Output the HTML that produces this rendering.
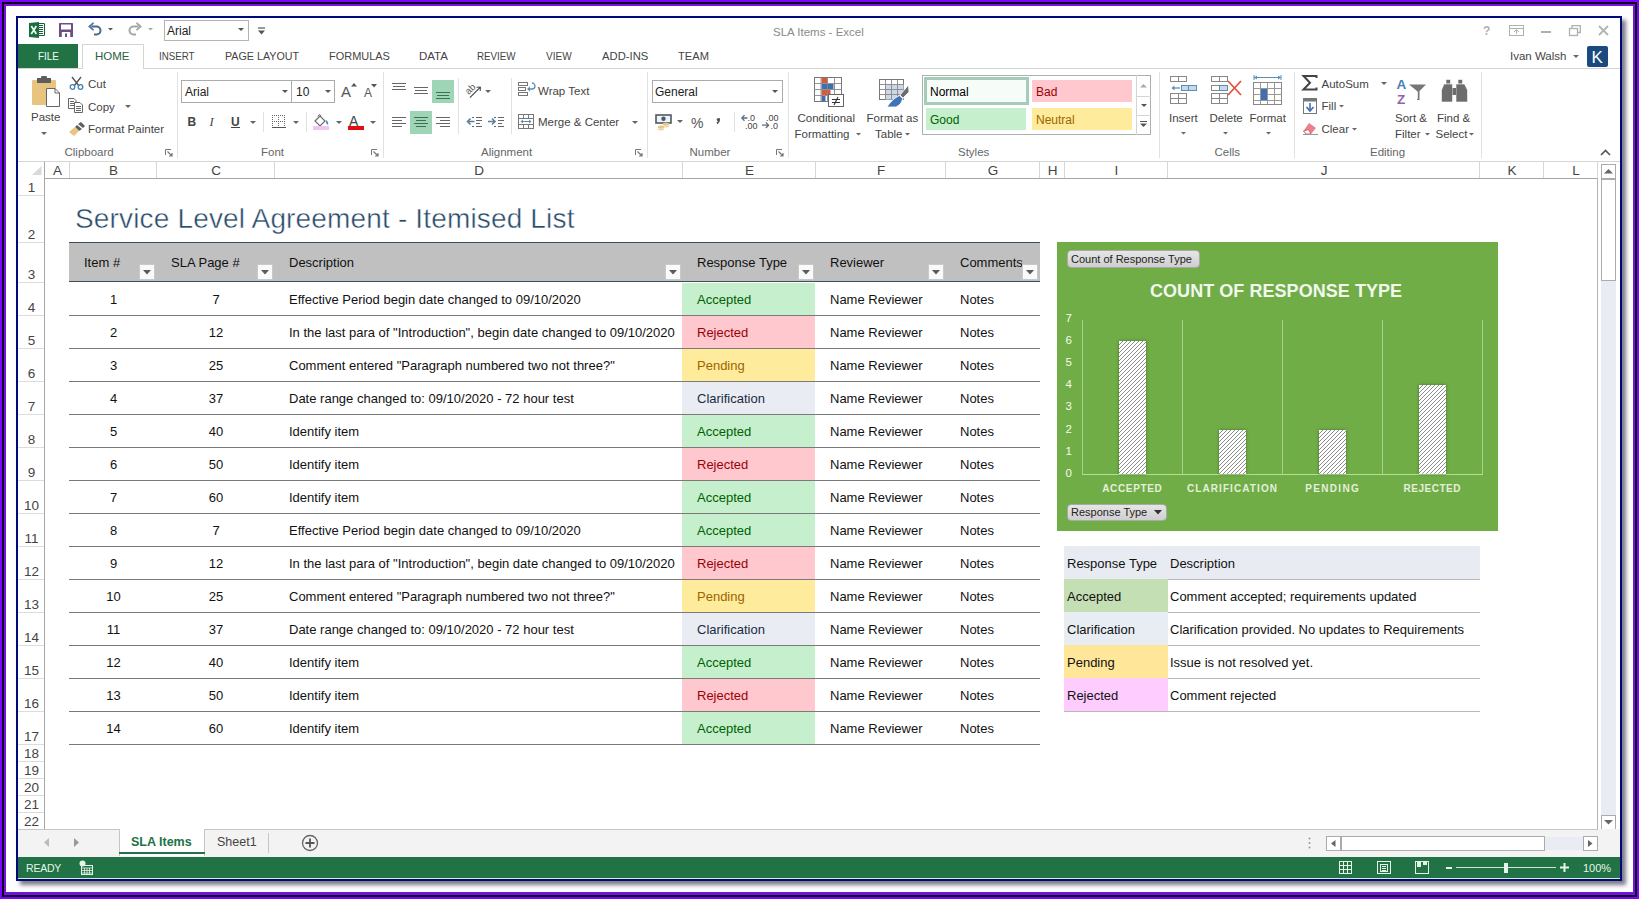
<!DOCTYPE html>
<html><head><meta charset="utf-8">
<style>
*{margin:0;padding:0;box-sizing:border-box}
html,body{width:1639px;height:899px;overflow:hidden;background:#7f02fc;font-family:"Liberation Sans",sans-serif;position:relative}
.a{position:absolute}
.t{white-space:nowrap;line-height:1}
svg{overflow:visible}
</style></head>
<body>

<div class="a" style="left:2px;top:2px;width:1635px;height:895px;border:2px solid #08001c;background:#7612de;"></div>
<div class="a" style="left:6px;top:6px;width:1627px;height:886px;background:#fefdff;"></div>
<div class="a" style="left:16px;top:16px;width:1606px;height:865px;background:#fff;border:2px solid #00087a;box-shadow:4px 4px 4px rgba(20,20,40,.55);"></div>
<div class="a" style="left:18px;top:18px;width:1602px;height:143px;background:#ffffff;"></div>
<svg class="a" style="left:29px;top:22px;" width="17" height="16" viewBox="0 0 17 16"><rect x="9.5" y="1.5" width="6" height="12" rx="0.8" fill="#fff" stroke="#1d5e3a" stroke-width="1.1"/>
      <path d="M10 3.5H14M10 5.5H14M10 7.5H14M10 9.5H14M10 11.5H14" stroke="#1d5e3a" stroke-width="1"/>
      <path d="M0 1L10 0V16L0 15Z" fill="#1e6b41"/>
      <path d="M2.3 4L7.3 12M7.3 4L2.3 12" stroke="#e8fff0" stroke-width="1.7"/></svg>
<svg class="a" style="left:59px;top:23px;" width="14" height="14" viewBox="0 0 14 14"><rect x="0" y="0" width="14" height="14" rx="0.5" fill="#6b4f82"/>
      <rect x="2" y="1.5" width="10" height="5" fill="#fff"/>
      <rect x="2.8" y="9" width="8.4" height="5" fill="#fff"/>
      <rect x="6" y="10.5" width="2" height="3.5" fill="#6b4f82"/></svg>
<svg class="a" style="left:88px;top:22px;" width="15" height="15" viewBox="0 0 15 15"><path d="M3.5 4.5H8.5A4 4 0 0 1 8.5 12.5H6" fill="none" stroke="#4b6a8a" stroke-width="2"/>
      <path d="M0 4.5L5.2 0L6 1.5L3 4.5L6 7.5L5.2 9Z" fill="#4f7aab"/></svg>
<svg class="a" style="left:107.0px;top:27px;" width="7.0" height="4.5" viewBox="0 0 7.0 4.5"><path d="M1 1 L6.0 1 L3.5 3.5 Z" fill="#555"/></svg>
<svg class="a" style="left:127px;top:22px;" width="15" height="15" viewBox="0 0 15 15"><path d="M11.5 4.5H6.5A4 4 0 0 0 6.5 12.5H9" fill="none" stroke="#a6a6a6" stroke-width="2"/>
      <path d="M15 4.5L9.8 0L9 1.5L12 4.5L9 7.5L9.8 9Z" fill="#a6a6a6"/></svg>
<svg class="a" style="left:146.5px;top:27px;" width="7.0" height="4.5" viewBox="0 0 7.0 4.5"><path d="M1 1 L6.0 1 L3.5 3.5 Z" fill="#aaa"/></svg>
<div class="a" style="left:164px;top:20px;width:85px;height:21px;background:#fff;border:1px solid #b4b4b4;"></div>
<div class="a t" style="left:167px;top:25.44px;font-size:12px;color:#222;">Arial</div>
<svg class="a" style="left:237px;top:27px;" width="8" height="5" viewBox="0 0 8 5"><path d="M1 1 L7 1 L4 4 Z" fill="#555"/></svg>
<svg class="a" style="left:257px;top:27px;" width="9" height="9" viewBox="0 0 9 9"><path d="M1 1h7" stroke="#555" stroke-width="1.2"/><path d="M1 3.5 L8 3.5 L4.5 7.5 Z" fill="#555"/></svg>
<div class="a t" style="left:773px;top:26.87px;font-size:11.5px;color:#8a8a8a;">SLA Items - Excel</div>
<div class="a t" style="left:1483px;top:25.44px;font-size:12px;color:#b0b0b0;font-weight:bold;">?</div>
<svg class="a" style="left:1509px;top:25px;" width="15" height="11" viewBox="0 0 15 11"><rect x="0.5" y="0.5" width="14" height="10" fill="none" stroke="#b0b0b0"/><path d="M0.5 3.5h14" stroke="#b0b0b0"/><path d="M7.5 9V5M5 7l2.5-2.5L10 7" fill="none" stroke="#b0b0b0"/></svg>
<div class="a" style="left:1541px;top:31px;width:10px;height:2px;background:#b0b0b0;"></div>
<svg class="a" style="left:1569px;top:25px;" width="12" height="11" viewBox="0 0 12 11"><rect x="0.5" y="3.5" width="8" height="7" fill="none" stroke="#b0b0b0" stroke-width="1.3"/><path d="M3 3.5V0.7H11.3V7.5H8.5" fill="none" stroke="#b0b0b0" stroke-width="1.3"/></svg>
<svg class="a" style="left:1598px;top:25px;" width="11" height="11" viewBox="0 0 11 11"><path d="M1 1L10 10M10 1L1 10" stroke="#b4b4b4" stroke-width="1.8"/></svg>
<div class="a" style="left:18px;top:44px;width:60px;height:25px;background:#217346;"></div>
<div class="a t" style="left:38px;top:51.37px;font-size:11.5px;color:#f0fff0;transform:scaleX(0.86);transform-origin:0 0;">FILE</div>
<div class="a" style="left:82px;top:44px;width:62px;height:25px;background:#fff;border:1px solid #d4d4d4;border-bottom:none;"></div>
<div class="a" style="left:18px;top:68px;width:64px;height:1px;background:#d4d4d4;"></div>
<div class="a" style="left:144px;top:68px;width:1476px;height:1px;background:#d4d4d4;"></div>
<div class="a t" style="left:95px;top:51.37px;font-size:11.5px;color:#2e5d3f;">HOME</div>
<div class="a t" style="left:159px;top:51.37px;font-size:11.5px;color:#444;transform:scaleX(0.847);transform-origin:0 0;">INSERT</div>
<div class="a t" style="left:225px;top:51.37px;font-size:11.5px;color:#444;transform:scaleX(0.932);transform-origin:0 0;">PAGE LAYOUT</div>
<div class="a t" style="left:329px;top:51.37px;font-size:11.5px;color:#444;transform:scaleX(0.953);transform-origin:0 0;">FORMULAS</div>
<div class="a t" style="left:419px;top:51.37px;font-size:11.5px;color:#444;transform:scaleX(1.0);transform-origin:0 0;">DATA</div>
<div class="a t" style="left:477px;top:51.37px;font-size:11.5px;color:#444;transform:scaleX(0.851);transform-origin:0 0;">REVIEW</div>
<div class="a t" style="left:546px;top:51.37px;font-size:11.5px;color:#444;transform:scaleX(0.871);transform-origin:0 0;">VIEW</div>
<div class="a t" style="left:602px;top:51.37px;font-size:11.5px;color:#444;transform:scaleX(0.979);transform-origin:0 0;">ADD-INS</div>
<div class="a t" style="left:678px;top:51.37px;font-size:11.5px;color:#444;transform:scaleX(0.969);transform-origin:0 0;">TEAM</div>
<div class="a t" style="left:1510px;top:50.87px;font-size:11.5px;color:#444;">Ivan Walsh</div>
<svg class="a" style="left:1572px;top:53.5px;" width="8" height="5" viewBox="0 0 8 5"><path d="M1 1 L7 1 L4 4 Z" fill="#666"/></svg>
<div class="a" style="left:1587px;top:46px;width:21px;height:21px;background:#1b4a7e;border-radius:2px;"></div>
<div class="a t" style="left:1591.5px;top:49.21px;font-size:17px;color:#fff;">K</div>
<div class="a" style="left:18px;top:161px;width:1602px;height:1px;background:#d6d6d6;"></div>
<div class="a" style="left:177px;top:72px;width:1px;height:86px;background:#e1e1e1;"></div>
<div class="a" style="left:383px;top:72px;width:1px;height:86px;background:#e1e1e1;"></div>
<div class="a" style="left:647px;top:72px;width:1px;height:86px;background:#e1e1e1;"></div>
<div class="a" style="left:788px;top:72px;width:1px;height:86px;background:#e1e1e1;"></div>
<div class="a" style="left:1159px;top:72px;width:1px;height:86px;background:#e1e1e1;"></div>
<div class="a" style="left:1294px;top:72px;width:1px;height:86px;background:#e1e1e1;"></div>
<div class="a" style="left:1481px;top:72px;width:1px;height:86px;background:#e1e1e1;"></div>
<svg class="a" style="left:165px;top:149px;" width="8" height="8" viewBox="0 0 8 8"><path d="M0.5 6V0.5H6" fill="none" stroke="#777"/><path d="M2.5 2.5L7 7M4 7H7V4" fill="none" stroke="#777" stroke-width="1.2"/></svg>
<svg class="a" style="left:371px;top:149px;" width="8" height="8" viewBox="0 0 8 8"><path d="M0.5 6V0.5H6" fill="none" stroke="#777"/><path d="M2.5 2.5L7 7M4 7H7V4" fill="none" stroke="#777" stroke-width="1.2"/></svg>
<svg class="a" style="left:635px;top:149px;" width="8" height="8" viewBox="0 0 8 8"><path d="M0.5 6V0.5H6" fill="none" stroke="#777"/><path d="M2.5 2.5L7 7M4 7H7V4" fill="none" stroke="#777" stroke-width="1.2"/></svg>
<svg class="a" style="left:776px;top:149px;" width="8" height="8" viewBox="0 0 8 8"><path d="M0.5 6V0.5H6" fill="none" stroke="#777"/><path d="M2.5 2.5L7 7M4 7H7V4" fill="none" stroke="#777" stroke-width="1.2"/></svg>
<svg class="a" style="left:31px;top:76px;" width="30" height="32" viewBox="0 0 30 32"><rect x="1" y="4" width="24" height="25" rx="1" fill="#e8c57f"/>
      <rect x="6" y="2" width="14" height="5" fill="#5e5e5e"/><rect x="10" y="0" width="6" height="3" rx="1" fill="#5e5e5e"/>
      <path d="M15.5 12.5H24L28.5 17V30.5H15.5Z" fill="#fff" stroke="#666"/><path d="M24 12.5V17H28.5" fill="none" stroke="#666"/></svg>
<div class="a t" style="left:31px;top:112.37px;font-size:11.5px;color:#444;">Paste</div>
<svg class="a" style="left:39.5px;top:131px;" width="8" height="5" viewBox="0 0 8 5"><path d="M1 1 L7 1 L4 4 Z" fill="#666"/></svg>
<svg class="a" style="left:69px;top:76px;" width="15" height="14" viewBox="0 0 15 14"><path d="M3 1L10 10M12 1L5 10" stroke="#555" stroke-width="1.4"/>
      <circle cx="3.5" cy="11" r="2.3" fill="none" stroke="#3f83b5" stroke-width="1.3"/><circle cx="11.5" cy="11" r="2.3" fill="none" stroke="#3f83b5" stroke-width="1.3"/></svg>
<div class="a t" style="left:88px;top:78.87px;font-size:11.5px;color:#444;">Cut</div>
<svg class="a" style="left:68px;top:98px;" width="16" height="15" viewBox="0 0 16 15"><path d="M0.5 0.5H6L8 2.5V10.5H0.5Z" fill="#fff" stroke="#666"/><path d="M2 3.5h4M2 5.5h4M2 7.5h4" stroke="#666"/>
      <path d="M6.5 4.5H12L14.5 7V14.5H6.5Z" fill="#fff" stroke="#666"/><path d="M8 8.5h5M8 10.5h5M8 12.5h5" stroke="#666"/></svg>
<div class="a t" style="left:88px;top:101.87px;font-size:11.5px;color:#444;">Copy</div>
<svg class="a" style="left:124px;top:104px;" width="8" height="5" viewBox="0 0 8 5"><path d="M1 1 L7 1 L4 4 Z" fill="#666"/></svg>
<svg class="a" style="left:69px;top:122px;" width="16" height="14" viewBox="0 0 16 14"><path d="M9 2L12 0L16 4L14 6Z" fill="#5e5e5e"/><path d="M8 3L13 7L10 9L6 5Z" fill="#5e5e5e"/>
      <path d="M6 5L10 9L5 14L0 10Z" fill="#e8c57f"/></svg>
<div class="a t" style="left:88px;top:124.37px;font-size:11.5px;color:#444;">Format Painter</div>
<div class="a t" style="left:64.5px;top:147.37px;font-size:11.5px;color:#666;">Clipboard</div>
<div class="a" style="left:181px;top:80px;width:111px;height:23px;background:#fff;border:1px solid #ababab;"></div>
<div class="a" style="left:291px;top:80px;width:44px;height:23px;background:#fff;border:1px solid #ababab;"></div>
<div class="a t" style="left:185px;top:86.44px;font-size:12px;color:#222;">Arial</div>
<svg class="a" style="left:280.5px;top:89px;" width="8" height="5" viewBox="0 0 8 5"><path d="M1 1 L7 1 L4 4 Z" fill="#555"/></svg>
<div class="a t" style="left:296px;top:86.44px;font-size:12px;color:#222;">10</div>
<svg class="a" style="left:323.5px;top:89px;" width="8" height="5" viewBox="0 0 8 5"><path d="M1 1 L7 1 L4 4 Z" fill="#555"/></svg>
<div class="a t" style="left:341px;top:84.40px;font-size:15px;color:#555;">A</div>
<svg class="a" style="left:351px;top:83px;" width="6" height="4" viewBox="0 0 6 4"><path d="M0 3.5L3 0L6 3.5Z" fill="#555"/></svg>
<div class="a t" style="left:364px;top:87.44px;font-size:12px;color:#555;">A</div>
<svg class="a" style="left:371px;top:84px;" width="6" height="4" viewBox="0 0 6 4"><path d="M0 0L3 3.5L6 0Z" fill="#555"/></svg>
<div class="a t" style="left:187.5px;top:116.44px;font-size:12px;color:#444;font-weight:bold;">B</div>
<div class="a t" style="left:209.5px;top:116.02px;font-size:12.5px;color:#444;font-style:italic;font-family:Liberation Serif;">I</div>
<div class="a t" style="left:231px;top:116.44px;font-size:12px;color:#444;font-weight:bold;">U</div>
<div class="a" style="left:231px;top:127px;width:9px;height:1px;background:#444;"></div>
<svg class="a" style="left:248.5px;top:120px;" width="8" height="5" viewBox="0 0 8 5"><path d="M1 1 L7 1 L4 4 Z" fill="#666"/></svg>
<div class="a" style="left:263px;top:112px;width:1px;height:20px;background:#e1e1e1;"></div>
<svg class="a" style="left:272px;top:115px;" width="14" height="14" viewBox="0 0 14 14"><rect x="0" y="0" width="1" height="1" fill="#666"/><rect x="2" y="0" width="1" height="1" fill="#666"/><rect x="4" y="0" width="1" height="1" fill="#666"/><rect x="6" y="0" width="1" height="1" fill="#666"/><rect x="8" y="0" width="1" height="1" fill="#666"/><rect x="10" y="0" width="1" height="1" fill="#666"/><rect x="12" y="0" width="1" height="1" fill="#666"/><rect x="0" y="2" width="1" height="1" fill="#666"/><rect x="6" y="2" width="1" height="1" fill="#666"/><rect x="12" y="2" width="1" height="1" fill="#666"/><rect x="0" y="4" width="1" height="1" fill="#666"/><rect x="6" y="4" width="1" height="1" fill="#666"/><rect x="12" y="4" width="1" height="1" fill="#666"/><rect x="0" y="6" width="1" height="1" fill="#666"/><rect x="2" y="6" width="1" height="1" fill="#666"/><rect x="4" y="6" width="1" height="1" fill="#666"/><rect x="6" y="6" width="1" height="1" fill="#666"/><rect x="8" y="6" width="1" height="1" fill="#666"/><rect x="10" y="6" width="1" height="1" fill="#666"/><rect x="12" y="6" width="1" height="1" fill="#666"/><rect x="0" y="8" width="1" height="1" fill="#666"/><rect x="6" y="8" width="1" height="1" fill="#666"/><rect x="12" y="8" width="1" height="1" fill="#666"/><rect x="0" y="10" width="1" height="1" fill="#666"/><rect x="6" y="10" width="1" height="1" fill="#666"/><rect x="12" y="10" width="1" height="1" fill="#666"/><rect x="0" y="12" width="14" height="1" fill="#555"/></svg>
<svg class="a" style="left:291.5px;top:120px;" width="8" height="5" viewBox="0 0 8 5"><path d="M1 1 L7 1 L4 4 Z" fill="#666"/></svg>
<div class="a" style="left:306px;top:112px;width:1px;height:20px;background:#e1e1e1;"></div>
<svg class="a" style="left:313px;top:114px;" width="18" height="16" viewBox="0 0 18 16"><path d="M2 7L7 2L12 7L7 12Z" fill="#fff" stroke="#666" stroke-width="1.1"/><path d="M5 2.5Q6 -1 8 2" fill="none" stroke="#666"/>
      <path d="M13 6Q16 8 15 11Q12 9 13 6Z" fill="#5a8fb5"/><rect x="0" y="12" width="16" height="4" fill="#eec6ee"/></svg>
<svg class="a" style="left:334.5px;top:120px;" width="8" height="5" viewBox="0 0 8 5"><path d="M1 1 L7 1 L4 4 Z" fill="#666"/></svg>
<div class="a t" style="left:349px;top:113.75px;font-size:14px;color:#444;">A</div>
<div class="a" style="left:348px;top:126px;width:16px;height:4px;background:#e01010;"></div>
<svg class="a" style="left:369px;top:120px;" width="8" height="5" viewBox="0 0 8 5"><path d="M1 1 L7 1 L4 4 Z" fill="#666"/></svg>
<div class="a t" style="left:261px;top:147.37px;font-size:11.5px;color:#666;">Font</div>
<div class="a" style="left:392px;top:83px;width:14px;height:1px;background:#666;"></div>
<div class="a" style="left:393px;top:86px;width:12px;height:1px;background:#666;"></div>
<div class="a" style="left:392px;top:89px;width:14px;height:1px;background:#666;"></div>
<div class="a" style="left:414px;top:87px;width:14px;height:1px;background:#666;"></div>
<div class="a" style="left:415px;top:90px;width:12px;height:1px;background:#666;"></div>
<div class="a" style="left:414px;top:93px;width:14px;height:1px;background:#666;"></div>
<div class="a" style="left:432px;top:80px;width:22px;height:23px;background:#9fd5b7;"></div>
<div class="a" style="left:436px;top:92px;width:14px;height:1px;background:#3f6e52;"></div>
<div class="a" style="left:437px;top:95px;width:12px;height:1px;background:#3f6e52;"></div>
<div class="a" style="left:436px;top:98px;width:14px;height:1px;background:#3f6e52;"></div>
<div class="a" style="left:458px;top:78px;width:1px;height:56px;background:#e1e1e1;"></div>
<svg class="a" style="left:465px;top:82px;" width="20" height="16" viewBox="0 0 20 16"><text x="0" y="10" font-family="Liberation Sans" font-size="9.5" fill="#555" transform="rotate(-45 5.5 7)">ab</text>
      <path d="M5 15.5L15.5 5M15.5 5L11.5 5.3M15.5 5L15.2 9" stroke="#555" fill="none" stroke-width="1.1"/></svg>
<svg class="a" style="left:484px;top:89px;" width="8" height="5" viewBox="0 0 8 5"><path d="M1 1 L7 1 L4 4 Z" fill="#666"/></svg>
<div class="a" style="left:511px;top:78px;width:1px;height:56px;background:#e1e1e1;"></div>
<svg class="a" style="left:518px;top:82px;" width="19" height="16" viewBox="0 0 19 16"><rect x="0.5" y="0.5" width="9" height="3" fill="none" stroke="#777"/><rect x="0.5" y="5.5" width="7" height="3" fill="none" stroke="#777"/><rect x="0.5" y="10.5" width="9" height="3" fill="none" stroke="#777"/>
      <path d="M10 7H14A3 3 0 0 0 14 1" fill="none" stroke="#5a8fb5" stroke-width="1.3"/><path d="M9 7L12 4.5V9.5Z" fill="#5a8fb5"/></svg>
<div class="a t" style="left:538px;top:86.37px;font-size:11.5px;color:#444;">Wrap Text</div>
<div class="a" style="left:392px;top:117px;width:14px;height:1px;background:#666;"></div>
<div class="a" style="left:392px;top:120px;width:10px;height:1px;background:#666;"></div>
<div class="a" style="left:392px;top:123px;width:14px;height:1px;background:#666;"></div>
<div class="a" style="left:392px;top:126px;width:10px;height:1px;background:#666;"></div>
<div class="a" style="left:410px;top:111px;width:22px;height:23px;background:#9fd5b7;"></div>
<div class="a" style="left:414px;top:117px;width:14px;height:1px;background:#3f6e52;"></div>
<div class="a" style="left:416px;top:120px;width:10px;height:1px;background:#3f6e52;"></div>
<div class="a" style="left:414px;top:123px;width:14px;height:1px;background:#3f6e52;"></div>
<div class="a" style="left:416px;top:126px;width:10px;height:1px;background:#3f6e52;"></div>
<div class="a" style="left:436px;top:117px;width:14px;height:1px;background:#666;"></div>
<div class="a" style="left:440px;top:120px;width:10px;height:1px;background:#666;"></div>
<div class="a" style="left:436px;top:123px;width:14px;height:1px;background:#666;"></div>
<div class="a" style="left:440px;top:126px;width:10px;height:1px;background:#666;"></div>
<div class="a" style="left:476px;top:117px;width:6px;height:1px;background:#666;"></div>
<div class="a" style="left:472px;top:117px;width:2px;height:1px;background:#666;"></div>
<div class="a" style="left:476px;top:126px;width:6px;height:1px;background:#666;"></div>
<div class="a" style="left:472px;top:126px;width:2px;height:1px;background:#666;"></div>
<div class="a" style="left:476px;top:120px;width:6px;height:1px;background:#666;"></div>
<div class="a" style="left:476px;top:123px;width:4px;height:1px;background:#666;"></div>
<svg class="a" style="left:466px;top:117px;" width="9" height="9" viewBox="0 0 9 9"><path d="M8.5 4.5H2M4.5 1.5L1.5 4.5L4.5 7.5" fill="none" stroke="#5f7f99" stroke-width="1.6"/></svg>
<div class="a" style="left:498px;top:117px;width:6px;height:1px;background:#666;"></div>
<div class="a" style="left:494px;top:117px;width:2px;height:1px;background:#666;"></div>
<div class="a" style="left:498px;top:126px;width:6px;height:1px;background:#666;"></div>
<div class="a" style="left:494px;top:126px;width:2px;height:1px;background:#666;"></div>
<div class="a" style="left:498px;top:120px;width:6px;height:1px;background:#666;"></div>
<div class="a" style="left:498px;top:123px;width:4px;height:1px;background:#666;"></div>
<svg class="a" style="left:488px;top:117px;" width="9" height="9" viewBox="0 0 9 9"><path d="M0 4.5H6.5M4 1.5L7 4.5L4 7.5" fill="none" stroke="#5f7f99" stroke-width="1.6"/></svg>
<svg class="a" style="left:518px;top:114px;" width="16" height="15" viewBox="0 0 16 15"><rect x="0.5" y="0.5" width="15" height="14" fill="#fff" stroke="#777"/><path d="M0.5 4.5H15.5M0.5 10.5H15.5M5.5 0.5V4.5M10.5 0.5V4.5M5.5 10.5V14.5M10.5 10.5V14.5" stroke="#777"/>
      <path d="M3 7.5H13" stroke="#5a8fb5"/><path d="M2.5 7.5L5 5.5V9.5Z M13.5 7.5L11 5.5V9.5Z" fill="#5a8fb5"/></svg>
<div class="a t" style="left:538px;top:117.37px;font-size:11.5px;color:#444;">Merge &amp; Center</div>
<svg class="a" style="left:631px;top:120px;" width="8" height="5" viewBox="0 0 8 5"><path d="M1 1 L7 1 L4 4 Z" fill="#666"/></svg>
<div class="a t" style="left:481px;top:147.37px;font-size:11.5px;color:#666;">Alignment</div>
<div class="a" style="left:652px;top:80px;width:131px;height:23px;background:#fff;border:1px solid #ababab;"></div>
<div class="a t" style="left:655px;top:86.44px;font-size:12px;color:#222;">General</div>
<svg class="a" style="left:771px;top:89px;" width="8" height="5" viewBox="0 0 8 5"><path d="M1 1 L7 1 L4 4 Z" fill="#555"/></svg>
<svg class="a" style="left:655px;top:114px;" width="20" height="17" viewBox="0 0 20 17"><rect x="1" y="1" width="15" height="8" fill="#eef3f7" stroke="#4b5a66" stroke-width="1.6"/><circle cx="8.5" cy="4.8" r="2.2" fill="#4b5a66"/>
      <ellipse cx="11" cy="10" rx="3.2" ry="1.5" fill="#e6c58a"/><ellipse cx="11" cy="12.2" rx="3.2" ry="1.2" fill="#f0d9a8"/>
      <ellipse cx="6" cy="13" rx="3.2" ry="1.5" fill="#e6c58a"/><ellipse cx="6" cy="15.2" rx="3.2" ry="1.2" fill="#f0d9a8"/></svg>
<svg class="a" style="left:675.5px;top:119px;" width="8" height="5" viewBox="0 0 8 5"><path d="M1 1 L7 1 L4 4 Z" fill="#666"/></svg>
<div class="a t" style="left:691px;top:116.25px;font-size:14px;color:#555;">%</div>
<svg class="a" style="left:716px;top:118px;" width="4" height="6" viewBox="0 0 4 6"><path d="M2.8 0.5Q4 3 1 5.5" fill="none" stroke="#555" stroke-width="1.8"/><circle cx="2.2" cy="1.6" r="1.5" fill="#555"/></svg>
<div class="a" style="left:734px;top:112px;width:1px;height:20px;background:#e1e1e1;"></div>
<svg class="a" style="left:741px;top:114px;" width="17" height="15" viewBox="0 0 17 15"><text x="6.5" y="7" font-family="Liberation Sans" font-size="9" fill="#444">.0</text><text x="4" y="14.5" font-family="Liberation Sans" font-size="9" fill="#444">.00</text>
      <path d="M1 4H6.5M3.5 1.2L0.8 4L3.5 6.8" fill="none" stroke="#5f7080" stroke-width="1.3"/></svg>
<svg class="a" style="left:762px;top:114px;" width="17" height="15" viewBox="0 0 17 15"><text x="4" y="7" font-family="Liberation Sans" font-size="9" fill="#444">.00</text><text x="8.5" y="14.5" font-family="Liberation Sans" font-size="9" fill="#444">.0</text>
      <path d="M0 11.2H6.5M3.8 8.4L6.6 11.2L3.8 14" fill="none" stroke="#5f7080" stroke-width="1.3"/></svg>
<div class="a t" style="left:689.5px;top:147.37px;font-size:11.5px;color:#666;">Number</div>
<svg class="a" style="left:814px;top:77px;" width="31" height="30" viewBox="0 0 31 30"><rect x="0.5" y="0.5" width="27" height="24" fill="#fff" stroke="#777"/>
      <rect x="7.5" y="1" width="6" height="5" fill="#d9583b"/><rect x="7.5" y="7" width="12" height="5" fill="#3e6fb0"/><rect x="7.5" y="13" width="9" height="5" fill="#d9583b"/><rect x="7.5" y="19" width="4" height="5.5" fill="#3e6fb0"/>
      <path d="M0.5 6.5H27.5M0.5 12.5H27.5M0.5 18.5H27.5M7 0.5V24.5M13.5 0.5V24.5M20.5 0.5V24.5" stroke="#888" stroke-width="0.9"/>
      <rect x="14.5" y="17.5" width="15" height="12" fill="#fff" stroke="#666"/><path d="M18 22.5H26M18 25.5H26M24 20L20 28" stroke="#333" stroke-width="1.1"/></svg>
<div class="a t" style="left:797.5px;top:112.87px;font-size:11.5px;color:#444;">Conditional</div>
<div class="a t" style="left:794.5px;top:128.87px;font-size:11.5px;color:#444;">Formatting</div>
<svg class="a" style="left:855.0px;top:132px;" width="7.0" height="4.5" viewBox="0 0 7.0 4.5"><path d="M1 1 L6.0 1 L3.5 3.5 Z" fill="#666"/></svg>
<svg class="a" style="left:879px;top:79px;" width="32" height="29" viewBox="0 0 32 29"><rect x="0.5" y="0.5" width="24" height="20" fill="#fff" stroke="#777"/>
      <rect x="6.5" y="5.5" width="18" height="15" fill="#cdd8e6"/>
      <path d="M0.5 5.5H24.5M0.5 10.5H24.5M0.5 15.5H24.5M6.5 0.5V20.5M12.5 0.5V20.5M18.5 0.5V20.5" stroke="#888" stroke-width="0.9"/>
      <path d="M29.5 6L30 13L24 19L21 16Z" fill="#6d6d6d" stroke="#fff" stroke-width="0.8"/><path d="M20.5 16.5L23.5 19.5Q23 25 17 28H8Q13 20 20.5 16.5Z" fill="#3f74b5" stroke="#fff" stroke-width="0.8"/></svg>
<div class="a t" style="left:866.5px;top:112.87px;font-size:11.5px;color:#444;">Format as</div>
<div class="a t" style="left:875px;top:128.87px;font-size:11.5px;color:#444;">Table</div>
<svg class="a" style="left:904.0px;top:132px;" width="7.0" height="4.5" viewBox="0 0 7.0 4.5"><path d="M1 1 L6.0 1 L3.5 3.5 Z" fill="#666"/></svg>
<div class="a" style="left:922px;top:75px;width:229px;height:60px;background:#fff;border:1px solid #a9b3ae;"></div>
<div class="a" style="left:924px;top:77px;width:105px;height:28px;background:#f6fcf8;border:3px solid #a6cbb8;"></div>
<div class="a t" style="left:930px;top:85.94px;font-size:12px;color:#000;">Normal</div>
<div class="a" style="left:1032px;top:80px;width:100px;height:22px;background:#ffc7ce;"></div>
<div class="a t" style="left:1036px;top:85.94px;font-size:12px;color:#9c0006;">Bad</div>
<div class="a" style="left:926px;top:108px;width:100px;height:22px;background:#c6efce;"></div>
<div class="a t" style="left:930px;top:114.44px;font-size:12px;color:#006100;">Good</div>
<div class="a" style="left:1032px;top:108px;width:100px;height:22px;background:#ffeb9c;"></div>
<div class="a t" style="left:1036px;top:114.44px;font-size:12px;color:#9c6500;">Neutral</div>
<div class="a" style="left:1136px;top:75px;width:1px;height:60px;background:#d4d4d4;"></div>
<div class="a" style="left:1137px;top:96px;width:14px;height:1px;background:#d4d4d4;"></div>
<div class="a" style="left:1137px;top:115px;width:14px;height:1px;background:#d4d4d4;"></div>
<svg class="a" style="left:1140px;top:84px;" width="7" height="4" viewBox="0 0 7 4"><path d="M0 3.5L3.5 0L7 3.5Z" fill="#aaa"/></svg>
<svg class="a" style="left:1139.5px;top:103px;" width="8" height="5" viewBox="0 0 8 5"><path d="M1 1 L7 1 L4 4 Z" fill="#555"/></svg>
<svg class="a" style="left:1140px;top:121px;" width="7" height="7" viewBox="0 0 7 7"><path d="M0 0.5H7" stroke="#555"/><path d="M0 2.5H7L3.5 6Z" fill="#555"/></svg>
<div class="a t" style="left:958px;top:147.37px;font-size:11.5px;color:#666;">Styles</div>
<svg class="a" style="left:1170px;top:76px;" width="28" height="28" viewBox="0 0 28 28"><g fill="#fff" stroke="#888"><rect x="0.5" y="0.5" width="8" height="5"/><rect x="8.5" y="0.5" width="8" height="5"/>
      <rect x="0.5" y="17.5" width="8" height="5"/><rect x="8.5" y="17.5" width="8" height="5"/><rect x="0.5" y="22.5" width="8" height="5"/><rect x="8.5" y="22.5" width="8" height="5"/></g>
      <g fill="#c9d9ea" stroke="#5a8fb5"><rect x="11.5" y="9.5" width="7" height="5"/><rect x="18.5" y="9.5" width="8" height="5"/></g>
      <path d="M3 12H10" stroke="#5a8fb5" stroke-width="1.3"/><path d="M1.5 12L4.5 9.5V14.5Z" fill="#5a8fb5"/></svg>
<div class="a t" style="left:1169px;top:112.87px;font-size:11.5px;color:#444;">Insert</div>
<svg class="a" style="left:1180.0px;top:131px;" width="7.0" height="4.5" viewBox="0 0 7.0 4.5"><path d="M1 1 L6.0 1 L3.5 3.5 Z" fill="#666"/></svg>
<svg class="a" style="left:1211px;top:76px;" width="31" height="28" viewBox="0 0 31 28"><g fill="#fff" stroke="#888"><rect x="0.5" y="0.5" width="8" height="5"/><rect x="8.5" y="0.5" width="8" height="5"/>
      <rect x="0.5" y="17.5" width="8" height="5"/><rect x="8.5" y="17.5" width="8" height="5"/><rect x="0.5" y="22.5" width="8" height="5"/><rect x="8.5" y="22.5" width="8" height="5"/><rect x="0.5" y="9.5" width="8" height="5"/></g>
      <rect x="8.5" y="9.5" width="8" height="5" fill="#c9d9ea" stroke="#5a8fb5"/>
      <path d="M17 5L30 19M30 5L17 19" stroke="#e0533e" stroke-width="1.8"/></svg>
<div class="a t" style="left:1209.5px;top:112.87px;font-size:11.5px;color:#444;">Delete</div>
<svg class="a" style="left:1222.0px;top:131px;" width="7.0" height="4.5" viewBox="0 0 7.0 4.5"><path d="M1 1 L6.0 1 L3.5 3.5 Z" fill="#666"/></svg>
<svg class="a" style="left:1253px;top:75px;" width="30" height="32" viewBox="0 0 30 32"><path d="M1 2.5H28M1 0V5M28 0V5" stroke="#5a8fb5" stroke-width="1"/><path d="M1 2.5L4 0.5V4.5Z M28 2.5L25 0.5V4.5Z" fill="#5a8fb5"/>
      <g fill="#fff" stroke="#888"><rect x="0.5" y="7.5" width="28" height="22"/></g>
      <path d="M0.5 13.5H28.5M0.5 19.5H28.5M0.5 25.5H28.5M7.5 7.5V29.5M14.5 7.5V29.5M21.5 7.5V29.5" stroke="#999"/>
      <rect x="8" y="14" width="6" height="11" fill="#3f6fb0"/></svg>
<div class="a t" style="left:1249.5px;top:112.87px;font-size:11.5px;color:#444;">Format</div>
<svg class="a" style="left:1265.0px;top:131px;" width="7.0" height="4.5" viewBox="0 0 7.0 4.5"><path d="M1 1 L6.0 1 L3.5 3.5 Z" fill="#666"/></svg>
<div class="a t" style="left:1214.5px;top:147.37px;font-size:11.5px;color:#666;">Cells</div>
<svg class="a" style="left:1302px;top:75px;" width="16" height="16" viewBox="0 0 16 16"><path d="M14.5 3V1H1.5L8 7.8L1.5 14.5H14.5V12.5" fill="none" stroke="#444" stroke-width="2" stroke-linejoin="miter"/></svg>
<div class="a t" style="left:1321.5px;top:78.87px;font-size:11.5px;color:#444;">AutoSum</div>
<svg class="a" style="left:1379.5px;top:80.5px;" width="8" height="5" viewBox="0 0 8 5"><path d="M1 1 L7 1 L4 4 Z" fill="#666"/></svg>
<svg class="a" style="left:1303px;top:98px;" width="14" height="16" viewBox="0 0 14 16"><rect x="0.5" y="0.5" width="13" height="15" fill="#fff" stroke="#777"/><rect x="0.5" y="0.5" width="13" height="3" fill="#777"/><path d="M7 5V12" stroke="#3f6fb0" stroke-width="1.6"/><path d="M3.5 9L7 13L10.5 9" fill="none" stroke="#3f6fb0" stroke-width="1.6"/></svg>
<div class="a t" style="left:1321.5px;top:101.37px;font-size:11.5px;color:#444;">Fill</div>
<svg class="a" style="left:1338.0px;top:104px;" width="7.0" height="4.5" viewBox="0 0 7.0 4.5"><path d="M1 1 L6.0 1 L3.5 3.5 Z" fill="#666"/></svg>
<svg class="a" style="left:1303px;top:122px;" width="15" height="13" viewBox="0 0 15 13"><path d="M6 1L13 6L8 12H3L0.5 9Z" fill="#e8818d"/><path d="M0.5 9L3 12H8L5.5 7.5Z" fill="#fff" stroke="#c66"/><path d="M0 12.5H15" stroke="#999"/></svg>
<div class="a t" style="left:1321.5px;top:124.37px;font-size:11.5px;color:#444;">Clear</div>
<svg class="a" style="left:1350.5px;top:127px;" width="7.0" height="4.5" viewBox="0 0 7.0 4.5"><path d="M1 1 L6.0 1 L3.5 3.5 Z" fill="#666"/></svg>
<svg class="a" style="left:1396px;top:78px;" width="32" height="27" viewBox="0 0 32 27"><text x="0.5" y="11" font-family="Liberation Sans" font-weight="bold" font-size="13.5" fill="#4a7fb5">A</text><text x="1" y="26" font-family="Liberation Sans" font-weight="bold" font-size="13.5" fill="#8f63ad">Z</text>
      <path d="M13 6.5H30L23.5 13V22H21V13Z" fill="#777"/><path d="M21.5 13.5V21" stroke="#fff" stroke-width="0.8"/></svg>
<div class="a t" style="left:1395px;top:112.87px;font-size:11.5px;color:#444;">Sort &amp;</div>
<div class="a t" style="left:1395px;top:128.87px;font-size:11.5px;color:#444;">Filter</div>
<svg class="a" style="left:1423.5px;top:132px;" width="7.0" height="4.5" viewBox="0 0 7.0 4.5"><path d="M1 1 L6.0 1 L3.5 3.5 Z" fill="#666"/></svg>
<svg class="a" style="left:1441px;top:79px;" width="28" height="24" viewBox="0 0 28 24"><path d="M5 0.5H9.5V5H5Z M17 0.5H21.5V5H17Z" fill="#6d6d6d" stroke="#fff" stroke-width="0.6"/>
      <path d="M3 5H11.5V23H0.5V11Z M15 5H23.5L26.5 11V23H15Z" fill="#6d6d6d" stroke="#fff" stroke-width="0.6"/><rect x="11.5" y="9" width="3.5" height="7" fill="#6d6d6d"/></svg>
<div class="a t" style="left:1437px;top:112.87px;font-size:11.5px;color:#444;">Find &amp;</div>
<div class="a t" style="left:1435.5px;top:128.87px;font-size:11.5px;color:#444;">Select</div>
<svg class="a" style="left:1468.0px;top:132px;" width="7.0" height="4.5" viewBox="0 0 7.0 4.5"><path d="M1 1 L6.0 1 L3.5 3.5 Z" fill="#666"/></svg>
<div class="a t" style="left:1370px;top:147.37px;font-size:11.5px;color:#666;">Editing</div>
<svg class="a" style="left:1600px;top:149px;" width="11" height="7" viewBox="0 0 11 7"><path d="M1 6L5.5 1.5L10 6" fill="none" stroke="#555" stroke-width="1.6"/></svg>
<div class="a" style="left:18px;top:162px;width:1602px;height:16px;background:#fff;"></div>
<div class="a" style="left:44px;top:178px;width:1553px;height:1px;background:#a6a6a6;"></div>
<div class="a" style="left:69px;top:162px;width:1px;height:16px;background:#d8d8d8;"></div>
<div class="a t" style="left:-242.5px;width:600px;text-align:center;top:163.57px;font-size:13.5px;color:#444;">A</div>
<div class="a" style="left:156px;top:162px;width:1px;height:16px;background:#d8d8d8;"></div>
<div class="a t" style="left:-186.5px;width:600px;text-align:center;top:163.57px;font-size:13.5px;color:#444;">B</div>
<div class="a" style="left:274px;top:162px;width:1px;height:16px;background:#d8d8d8;"></div>
<div class="a t" style="left:-84.0px;width:600px;text-align:center;top:163.57px;font-size:13.5px;color:#444;">C</div>
<div class="a" style="left:682px;top:162px;width:1px;height:16px;background:#d8d8d8;"></div>
<div class="a t" style="left:179.0px;width:600px;text-align:center;top:163.57px;font-size:13.5px;color:#444;">D</div>
<div class="a" style="left:815px;top:162px;width:1px;height:16px;background:#d8d8d8;"></div>
<div class="a t" style="left:449.5px;width:600px;text-align:center;top:163.57px;font-size:13.5px;color:#444;">E</div>
<div class="a" style="left:945px;top:162px;width:1px;height:16px;background:#d8d8d8;"></div>
<div class="a t" style="left:581.0px;width:600px;text-align:center;top:163.57px;font-size:13.5px;color:#444;">F</div>
<div class="a" style="left:1039px;top:162px;width:1px;height:16px;background:#d8d8d8;"></div>
<div class="a t" style="left:693.0px;width:600px;text-align:center;top:163.57px;font-size:13.5px;color:#444;">G</div>
<div class="a" style="left:1064px;top:162px;width:1px;height:16px;background:#d8d8d8;"></div>
<div class="a t" style="left:752.5px;width:600px;text-align:center;top:163.57px;font-size:13.5px;color:#444;">H</div>
<div class="a" style="left:1167px;top:162px;width:1px;height:16px;background:#d8d8d8;"></div>
<div class="a t" style="left:816.5px;width:600px;text-align:center;top:163.57px;font-size:13.5px;color:#444;">I</div>
<div class="a" style="left:1479px;top:162px;width:1px;height:16px;background:#d8d8d8;"></div>
<div class="a t" style="left:1024.0px;width:600px;text-align:center;top:163.57px;font-size:13.5px;color:#444;">J</div>
<div class="a" style="left:1543px;top:162px;width:1px;height:16px;background:#d8d8d8;"></div>
<div class="a t" style="left:1212.0px;width:600px;text-align:center;top:163.57px;font-size:13.5px;color:#444;">K</div>
<div class="a" style="left:1597px;top:162px;width:1px;height:16px;background:#d8d8d8;"></div>
<div class="a t" style="left:1276.0px;width:600px;text-align:center;top:163.57px;font-size:13.5px;color:#444;">L</div>
<svg class="a" style="left:32px;top:166px;" width="10" height="9" viewBox="0 0 10 9"><path d="M9.5 0V9H0Z" fill="#dadada"/></svg>
<div class="a" style="left:44px;top:162px;width:1px;height:667px;background:#a6a6a6;"></div>
<div class="a" style="left:18px;top:195px;width:26px;height:1px;background:#dcdcdc;"></div>
<div class="a t" style="left:-268.5px;width:600px;text-align:center;top:180.57px;font-size:13.5px;color:#444;">1</div>
<div class="a" style="left:18px;top:242px;width:26px;height:1px;background:#dcdcdc;"></div>
<div class="a t" style="left:-268.5px;width:600px;text-align:center;top:227.57px;font-size:13.5px;color:#444;">2</div>
<div class="a" style="left:18px;top:282px;width:26px;height:1px;background:#dcdcdc;"></div>
<div class="a t" style="left:-268.5px;width:600px;text-align:center;top:267.57px;font-size:13.5px;color:#444;">3</div>
<div class="a" style="left:18px;top:315px;width:26px;height:1px;background:#dcdcdc;"></div>
<div class="a t" style="left:-268.5px;width:600px;text-align:center;top:300.57px;font-size:13.5px;color:#444;">4</div>
<div class="a" style="left:18px;top:348px;width:26px;height:1px;background:#dcdcdc;"></div>
<div class="a t" style="left:-268.5px;width:600px;text-align:center;top:333.57px;font-size:13.5px;color:#444;">5</div>
<div class="a" style="left:18px;top:381px;width:26px;height:1px;background:#dcdcdc;"></div>
<div class="a t" style="left:-268.5px;width:600px;text-align:center;top:366.57px;font-size:13.5px;color:#444;">6</div>
<div class="a" style="left:18px;top:414px;width:26px;height:1px;background:#dcdcdc;"></div>
<div class="a t" style="left:-268.5px;width:600px;text-align:center;top:399.57px;font-size:13.5px;color:#444;">7</div>
<div class="a" style="left:18px;top:447px;width:26px;height:1px;background:#dcdcdc;"></div>
<div class="a t" style="left:-268.5px;width:600px;text-align:center;top:432.57px;font-size:13.5px;color:#444;">8</div>
<div class="a" style="left:18px;top:480px;width:26px;height:1px;background:#dcdcdc;"></div>
<div class="a t" style="left:-268.5px;width:600px;text-align:center;top:465.57px;font-size:13.5px;color:#444;">9</div>
<div class="a" style="left:18px;top:513px;width:26px;height:1px;background:#dcdcdc;"></div>
<div class="a t" style="left:-268.5px;width:600px;text-align:center;top:498.57px;font-size:13.5px;color:#444;">10</div>
<div class="a" style="left:18px;top:546px;width:26px;height:1px;background:#dcdcdc;"></div>
<div class="a t" style="left:-268.5px;width:600px;text-align:center;top:531.57px;font-size:13.5px;color:#444;">11</div>
<div class="a" style="left:18px;top:579px;width:26px;height:1px;background:#dcdcdc;"></div>
<div class="a t" style="left:-268.5px;width:600px;text-align:center;top:564.57px;font-size:13.5px;color:#444;">12</div>
<div class="a" style="left:18px;top:612px;width:26px;height:1px;background:#dcdcdc;"></div>
<div class="a t" style="left:-268.5px;width:600px;text-align:center;top:597.57px;font-size:13.5px;color:#444;">13</div>
<div class="a" style="left:18px;top:645px;width:26px;height:1px;background:#dcdcdc;"></div>
<div class="a t" style="left:-268.5px;width:600px;text-align:center;top:630.57px;font-size:13.5px;color:#444;">14</div>
<div class="a" style="left:18px;top:678px;width:26px;height:1px;background:#dcdcdc;"></div>
<div class="a t" style="left:-268.5px;width:600px;text-align:center;top:663.57px;font-size:13.5px;color:#444;">15</div>
<div class="a" style="left:18px;top:711px;width:26px;height:1px;background:#dcdcdc;"></div>
<div class="a t" style="left:-268.5px;width:600px;text-align:center;top:696.57px;font-size:13.5px;color:#444;">16</div>
<div class="a" style="left:18px;top:744px;width:26px;height:1px;background:#dcdcdc;"></div>
<div class="a t" style="left:-268.5px;width:600px;text-align:center;top:729.57px;font-size:13.5px;color:#444;">17</div>
<div class="a" style="left:18px;top:761px;width:26px;height:1px;background:#dcdcdc;"></div>
<div class="a t" style="left:-268.5px;width:600px;text-align:center;top:746.57px;font-size:13.5px;color:#444;">18</div>
<div class="a" style="left:18px;top:778px;width:26px;height:1px;background:#dcdcdc;"></div>
<div class="a t" style="left:-268.5px;width:600px;text-align:center;top:763.57px;font-size:13.5px;color:#444;">19</div>
<div class="a" style="left:18px;top:795px;width:26px;height:1px;background:#dcdcdc;"></div>
<div class="a t" style="left:-268.5px;width:600px;text-align:center;top:780.57px;font-size:13.5px;color:#444;">20</div>
<div class="a" style="left:18px;top:812px;width:26px;height:1px;background:#dcdcdc;"></div>
<div class="a t" style="left:-268.5px;width:600px;text-align:center;top:797.57px;font-size:13.5px;color:#444;">21</div>
<div class="a" style="left:18px;top:829px;width:26px;height:1px;background:#dcdcdc;"></div>
<div class="a t" style="left:-268.5px;width:600px;text-align:center;top:814.57px;font-size:13.5px;color:#444;">22</div>
<div class="a" style="left:1597px;top:178px;width:1px;height:651px;background:#b4b4b4;"></div>
<div class="a t" style="left:75px;top:204.60px;font-size:28px;color:#274a6a;letter-spacing:0.16px;-webkit-text-stroke:0.45px #fff;">Service Level Agreement - Itemised List</div>
<div class="a" style="left:69px;top:242px;width:971px;height:40px;background:#c0c0c0;border-top:1px solid #3d4d5c;border-bottom:1px solid #3d4d5c;"></div>
<div class="a t" style="left:84px;top:255.50px;font-size:13px;color:#111;">Item #</div>
<div class="a" style="left:139px;top:264px;width:16px;height:16px;background:#fafafa;border:1px solid #c9c9c9;"></div>
<svg class="a" style="left:143px;top:270px;" width="8" height="5" viewBox="0 0 8 5"><path d="M0 0H8L4 4.5Z" fill="#5a5a5a"/></svg>
<div class="a t" style="left:171px;top:255.50px;font-size:13px;color:#111;">SLA Page #</div>
<div class="a" style="left:257px;top:264px;width:16px;height:16px;background:#fafafa;border:1px solid #c9c9c9;"></div>
<svg class="a" style="left:261px;top:270px;" width="8" height="5" viewBox="0 0 8 5"><path d="M0 0H8L4 4.5Z" fill="#5a5a5a"/></svg>
<div class="a t" style="left:289px;top:255.50px;font-size:13px;color:#111;">Description</div>
<div class="a" style="left:665px;top:264px;width:16px;height:16px;background:#fafafa;border:1px solid #c9c9c9;"></div>
<svg class="a" style="left:669px;top:270px;" width="8" height="5" viewBox="0 0 8 5"><path d="M0 0H8L4 4.5Z" fill="#5a5a5a"/></svg>
<div class="a t" style="left:697px;top:255.50px;font-size:13px;color:#111;">Response Type</div>
<div class="a" style="left:798px;top:264px;width:16px;height:16px;background:#fafafa;border:1px solid #c9c9c9;"></div>
<svg class="a" style="left:802px;top:270px;" width="8" height="5" viewBox="0 0 8 5"><path d="M0 0H8L4 4.5Z" fill="#5a5a5a"/></svg>
<div class="a t" style="left:830px;top:255.50px;font-size:13px;color:#111;">Reviewer</div>
<div class="a" style="left:928px;top:264px;width:16px;height:16px;background:#fafafa;border:1px solid #c9c9c9;"></div>
<svg class="a" style="left:932px;top:270px;" width="8" height="5" viewBox="0 0 8 5"><path d="M0 0H8L4 4.5Z" fill="#5a5a5a"/></svg>
<div class="a t" style="left:960px;top:255.50px;font-size:13px;color:#111;">Comments</div>
<div class="a" style="left:1022px;top:264px;width:16px;height:16px;background:#fafafa;border:1px solid #c9c9c9;"></div>
<svg class="a" style="left:1026px;top:270px;" width="8" height="5" viewBox="0 0 8 5"><path d="M0 0H8L4 4.5Z" fill="#5a5a5a"/></svg>
<div class="a" style="left:682px;top:283px;width:133px;height:32px;background:#c6efce;"></div>
<div class="a" style="left:69px;top:315px;width:971px;height:1px;background:#7a7a7a;"></div>
<div class="a t" style="left:-186.5px;width:600px;text-align:center;top:292.80px;font-size:13px;color:#111;">1</div>
<div class="a t" style="left:-84px;width:600px;text-align:center;top:292.80px;font-size:13px;color:#111;">7</div>
<div class="a t" style="left:289px;top:292.80px;font-size:13px;color:#111;">Effective Period begin date changed to 09/10/2020</div>
<div class="a t" style="left:697px;top:292.80px;font-size:13px;color:#006100;">Accepted</div>
<div class="a t" style="left:830px;top:292.80px;font-size:13px;color:#111;">Name Reviewer</div>
<div class="a t" style="left:960px;top:292.80px;font-size:13px;color:#111;">Notes</div>
<div class="a" style="left:682px;top:316px;width:133px;height:32px;background:#ffc7ce;"></div>
<div class="a" style="left:69px;top:348px;width:971px;height:1px;background:#7a7a7a;"></div>
<div class="a t" style="left:-186.5px;width:600px;text-align:center;top:325.80px;font-size:13px;color:#111;">2</div>
<div class="a t" style="left:-84px;width:600px;text-align:center;top:325.80px;font-size:13px;color:#111;">12</div>
<div class="a t" style="left:289px;top:325.80px;font-size:13px;color:#111;">In the last para of &quot;Introduction&quot;, begin date changed to 09/10/2020</div>
<div class="a t" style="left:697px;top:325.80px;font-size:13px;color:#9c0006;">Rejected</div>
<div class="a t" style="left:830px;top:325.80px;font-size:13px;color:#111;">Name Reviewer</div>
<div class="a t" style="left:960px;top:325.80px;font-size:13px;color:#111;">Notes</div>
<div class="a" style="left:682px;top:349px;width:133px;height:32px;background:#ffeb9c;"></div>
<div class="a" style="left:69px;top:381px;width:971px;height:1px;background:#7a7a7a;"></div>
<div class="a t" style="left:-186.5px;width:600px;text-align:center;top:358.80px;font-size:13px;color:#111;">3</div>
<div class="a t" style="left:-84px;width:600px;text-align:center;top:358.80px;font-size:13px;color:#111;">25</div>
<div class="a t" style="left:289px;top:358.80px;font-size:13px;color:#111;">Comment entered &quot;Paragraph numbered two not three?&quot;</div>
<div class="a t" style="left:697px;top:358.80px;font-size:13px;color:#9c6500;">Pending</div>
<div class="a t" style="left:830px;top:358.80px;font-size:13px;color:#111;">Name Reviewer</div>
<div class="a t" style="left:960px;top:358.80px;font-size:13px;color:#111;">Notes</div>
<div class="a" style="left:682px;top:382px;width:133px;height:32px;background:#e9edf3;"></div>
<div class="a" style="left:69px;top:414px;width:971px;height:1px;background:#7a7a7a;"></div>
<div class="a t" style="left:-186.5px;width:600px;text-align:center;top:391.80px;font-size:13px;color:#111;">4</div>
<div class="a t" style="left:-84px;width:600px;text-align:center;top:391.80px;font-size:13px;color:#111;">37</div>
<div class="a t" style="left:289px;top:391.80px;font-size:13px;color:#111;">Date range changed to: 09/10/2020 - 72 hour test</div>
<div class="a t" style="left:697px;top:391.80px;font-size:13px;color:#1b2a42;">Clarification</div>
<div class="a t" style="left:830px;top:391.80px;font-size:13px;color:#111;">Name Reviewer</div>
<div class="a t" style="left:960px;top:391.80px;font-size:13px;color:#111;">Notes</div>
<div class="a" style="left:682px;top:415px;width:133px;height:32px;background:#c6efce;"></div>
<div class="a" style="left:69px;top:447px;width:971px;height:1px;background:#7a7a7a;"></div>
<div class="a t" style="left:-186.5px;width:600px;text-align:center;top:424.80px;font-size:13px;color:#111;">5</div>
<div class="a t" style="left:-84px;width:600px;text-align:center;top:424.80px;font-size:13px;color:#111;">40</div>
<div class="a t" style="left:289px;top:424.80px;font-size:13px;color:#111;">Identify item</div>
<div class="a t" style="left:697px;top:424.80px;font-size:13px;color:#006100;">Accepted</div>
<div class="a t" style="left:830px;top:424.80px;font-size:13px;color:#111;">Name Reviewer</div>
<div class="a t" style="left:960px;top:424.80px;font-size:13px;color:#111;">Notes</div>
<div class="a" style="left:682px;top:448px;width:133px;height:32px;background:#ffc7ce;"></div>
<div class="a" style="left:69px;top:480px;width:971px;height:1px;background:#7a7a7a;"></div>
<div class="a t" style="left:-186.5px;width:600px;text-align:center;top:457.80px;font-size:13px;color:#111;">6</div>
<div class="a t" style="left:-84px;width:600px;text-align:center;top:457.80px;font-size:13px;color:#111;">50</div>
<div class="a t" style="left:289px;top:457.80px;font-size:13px;color:#111;">Identify item</div>
<div class="a t" style="left:697px;top:457.80px;font-size:13px;color:#9c0006;">Rejected</div>
<div class="a t" style="left:830px;top:457.80px;font-size:13px;color:#111;">Name Reviewer</div>
<div class="a t" style="left:960px;top:457.80px;font-size:13px;color:#111;">Notes</div>
<div class="a" style="left:682px;top:481px;width:133px;height:32px;background:#c6efce;"></div>
<div class="a" style="left:69px;top:513px;width:971px;height:1px;background:#7a7a7a;"></div>
<div class="a t" style="left:-186.5px;width:600px;text-align:center;top:490.80px;font-size:13px;color:#111;">7</div>
<div class="a t" style="left:-84px;width:600px;text-align:center;top:490.80px;font-size:13px;color:#111;">60</div>
<div class="a t" style="left:289px;top:490.80px;font-size:13px;color:#111;">Identify item</div>
<div class="a t" style="left:697px;top:490.80px;font-size:13px;color:#006100;">Accepted</div>
<div class="a t" style="left:830px;top:490.80px;font-size:13px;color:#111;">Name Reviewer</div>
<div class="a t" style="left:960px;top:490.80px;font-size:13px;color:#111;">Notes</div>
<div class="a" style="left:682px;top:514px;width:133px;height:32px;background:#c6efce;"></div>
<div class="a" style="left:69px;top:546px;width:971px;height:1px;background:#7a7a7a;"></div>
<div class="a t" style="left:-186.5px;width:600px;text-align:center;top:523.80px;font-size:13px;color:#111;">8</div>
<div class="a t" style="left:-84px;width:600px;text-align:center;top:523.80px;font-size:13px;color:#111;">7</div>
<div class="a t" style="left:289px;top:523.80px;font-size:13px;color:#111;">Effective Period begin date changed to 09/10/2020</div>
<div class="a t" style="left:697px;top:523.80px;font-size:13px;color:#006100;">Accepted</div>
<div class="a t" style="left:830px;top:523.80px;font-size:13px;color:#111;">Name Reviewer</div>
<div class="a t" style="left:960px;top:523.80px;font-size:13px;color:#111;">Notes</div>
<div class="a" style="left:682px;top:547px;width:133px;height:32px;background:#ffc7ce;"></div>
<div class="a" style="left:69px;top:579px;width:971px;height:1px;background:#7a7a7a;"></div>
<div class="a t" style="left:-186.5px;width:600px;text-align:center;top:556.80px;font-size:13px;color:#111;">9</div>
<div class="a t" style="left:-84px;width:600px;text-align:center;top:556.80px;font-size:13px;color:#111;">12</div>
<div class="a t" style="left:289px;top:556.80px;font-size:13px;color:#111;">In the last para of &quot;Introduction&quot;, begin date changed to 09/10/2020</div>
<div class="a t" style="left:697px;top:556.80px;font-size:13px;color:#9c0006;">Rejected</div>
<div class="a t" style="left:830px;top:556.80px;font-size:13px;color:#111;">Name Reviewer</div>
<div class="a t" style="left:960px;top:556.80px;font-size:13px;color:#111;">Notes</div>
<div class="a" style="left:682px;top:580px;width:133px;height:32px;background:#ffeb9c;"></div>
<div class="a" style="left:69px;top:612px;width:971px;height:1px;background:#7a7a7a;"></div>
<div class="a t" style="left:-186.5px;width:600px;text-align:center;top:589.80px;font-size:13px;color:#111;">10</div>
<div class="a t" style="left:-84px;width:600px;text-align:center;top:589.80px;font-size:13px;color:#111;">25</div>
<div class="a t" style="left:289px;top:589.80px;font-size:13px;color:#111;">Comment entered &quot;Paragraph numbered two not three?&quot;</div>
<div class="a t" style="left:697px;top:589.80px;font-size:13px;color:#9c6500;">Pending</div>
<div class="a t" style="left:830px;top:589.80px;font-size:13px;color:#111;">Name Reviewer</div>
<div class="a t" style="left:960px;top:589.80px;font-size:13px;color:#111;">Notes</div>
<div class="a" style="left:682px;top:613px;width:133px;height:32px;background:#e9edf3;"></div>
<div class="a" style="left:69px;top:645px;width:971px;height:1px;background:#7a7a7a;"></div>
<div class="a t" style="left:-186.5px;width:600px;text-align:center;top:622.80px;font-size:13px;color:#111;">11</div>
<div class="a t" style="left:-84px;width:600px;text-align:center;top:622.80px;font-size:13px;color:#111;">37</div>
<div class="a t" style="left:289px;top:622.80px;font-size:13px;color:#111;">Date range changed to: 09/10/2020 - 72 hour test</div>
<div class="a t" style="left:697px;top:622.80px;font-size:13px;color:#1b2a42;">Clarification</div>
<div class="a t" style="left:830px;top:622.80px;font-size:13px;color:#111;">Name Reviewer</div>
<div class="a t" style="left:960px;top:622.80px;font-size:13px;color:#111;">Notes</div>
<div class="a" style="left:682px;top:646px;width:133px;height:32px;background:#c6efce;"></div>
<div class="a" style="left:69px;top:678px;width:971px;height:1px;background:#7a7a7a;"></div>
<div class="a t" style="left:-186.5px;width:600px;text-align:center;top:655.80px;font-size:13px;color:#111;">12</div>
<div class="a t" style="left:-84px;width:600px;text-align:center;top:655.80px;font-size:13px;color:#111;">40</div>
<div class="a t" style="left:289px;top:655.80px;font-size:13px;color:#111;">Identify item</div>
<div class="a t" style="left:697px;top:655.80px;font-size:13px;color:#006100;">Accepted</div>
<div class="a t" style="left:830px;top:655.80px;font-size:13px;color:#111;">Name Reviewer</div>
<div class="a t" style="left:960px;top:655.80px;font-size:13px;color:#111;">Notes</div>
<div class="a" style="left:682px;top:679px;width:133px;height:32px;background:#ffc7ce;"></div>
<div class="a" style="left:69px;top:711px;width:971px;height:1px;background:#7a7a7a;"></div>
<div class="a t" style="left:-186.5px;width:600px;text-align:center;top:688.80px;font-size:13px;color:#111;">13</div>
<div class="a t" style="left:-84px;width:600px;text-align:center;top:688.80px;font-size:13px;color:#111;">50</div>
<div class="a t" style="left:289px;top:688.80px;font-size:13px;color:#111;">Identify item</div>
<div class="a t" style="left:697px;top:688.80px;font-size:13px;color:#9c0006;">Rejected</div>
<div class="a t" style="left:830px;top:688.80px;font-size:13px;color:#111;">Name Reviewer</div>
<div class="a t" style="left:960px;top:688.80px;font-size:13px;color:#111;">Notes</div>
<div class="a" style="left:682px;top:712px;width:133px;height:32px;background:#c6efce;"></div>
<div class="a" style="left:69px;top:744px;width:971px;height:1px;background:#7a7a7a;"></div>
<div class="a t" style="left:-186.5px;width:600px;text-align:center;top:721.80px;font-size:13px;color:#111;">14</div>
<div class="a t" style="left:-84px;width:600px;text-align:center;top:721.80px;font-size:13px;color:#111;">60</div>
<div class="a t" style="left:289px;top:721.80px;font-size:13px;color:#111;">Identify item</div>
<div class="a t" style="left:697px;top:721.80px;font-size:13px;color:#006100;">Accepted</div>
<div class="a t" style="left:830px;top:721.80px;font-size:13px;color:#111;">Name Reviewer</div>
<div class="a t" style="left:960px;top:721.80px;font-size:13px;color:#111;">Notes</div>
<div class="a" style="left:1057px;top:242px;width:441px;height:289px;background:#70ad47;"></div>
<div class="a" style="left:1067px;top:250px;width:133px;height:18px;background:linear-gradient(#e6e6e6,#cfcfcf);border-radius:4px;border:1px solid #a9a9a9;"></div>
<div class="a t" style="left:1071px;top:253.69px;font-size:11px;color:#222;">Count of Response Type</div>
<div class="a t" style="left:1150px;top:281.76px;font-size:18px;color:#f2f8ee;font-weight:bold;letter-spacing:0.05px;">COUNT OF RESPONSE TYPE</div>
<div class="a" style="left:1082px;top:320px;width:1px;height:154px;background:#a9d18e;"></div>
<div class="a" style="left:1182px;top:320px;width:1px;height:154px;background:#a9d18e;"></div>
<div class="a" style="left:1282px;top:320px;width:1px;height:154px;background:#a9d18e;"></div>
<div class="a" style="left:1382px;top:320px;width:1px;height:154px;background:#a9d18e;"></div>
<div class="a" style="left:1482px;top:320px;width:1px;height:154px;background:#a9d18e;"></div>
<div class="a" style="left:1082px;top:474px;width:401px;height:1px;background:#b5de9c;"></div>
<div class="a t" style="left:1065.5px;top:468.07px;font-size:11.5px;color:#f4fbee;">0</div>
<div class="a t" style="left:1065.5px;top:445.87px;font-size:11.5px;color:#f4fbee;">1</div>
<div class="a t" style="left:1065.5px;top:423.67px;font-size:11.5px;color:#f4fbee;">2</div>
<div class="a t" style="left:1065.5px;top:401.47px;font-size:11.5px;color:#f4fbee;">3</div>
<div class="a t" style="left:1065.5px;top:379.27px;font-size:11.5px;color:#f4fbee;">4</div>
<div class="a t" style="left:1065.5px;top:357.07px;font-size:11.5px;color:#f4fbee;">5</div>
<div class="a t" style="left:1065.5px;top:334.87px;font-size:11.5px;color:#f4fbee;">6</div>
<div class="a t" style="left:1065.5px;top:312.67px;font-size:11.5px;color:#f4fbee;">7</div>
<div class="a" style="left:1118.5px;top:340.8px;width:27px;height:133.2px;background:#fff;box-shadow:0 0 3px rgba(40,60,30,.5);"></div>
<svg class="a" style="left:1118.5px;top:340.8px;overflow:hidden;" width="27" height="133" viewBox="0 0 27 133"><defs><pattern id="hp1132" patternUnits="userSpaceOnUse" width="4" height="4"><path d="M-1 1L1 -1M0 4L4 0M3 5L5 3" stroke="#8c8c8c" stroke-width="1"/></pattern></defs><rect width="27" height="133.2" fill="url(#hp1132)"/></svg>
<div class="a" style="left:1218.5px;top:429.6px;width:27px;height:44.4px;background:#fff;box-shadow:0 0 3px rgba(40,60,30,.5);"></div>
<svg class="a" style="left:1218.5px;top:429.6px;overflow:hidden;" width="27" height="44" viewBox="0 0 27 44"><defs><pattern id="hp1232" patternUnits="userSpaceOnUse" width="4" height="4"><path d="M-1 1L1 -1M0 4L4 0M3 5L5 3" stroke="#8c8c8c" stroke-width="1"/></pattern></defs><rect width="27" height="44.4" fill="url(#hp1232)"/></svg>
<div class="a" style="left:1318.5px;top:429.6px;width:27px;height:44.4px;background:#fff;box-shadow:0 0 3px rgba(40,60,30,.5);"></div>
<svg class="a" style="left:1318.5px;top:429.6px;overflow:hidden;" width="27" height="44" viewBox="0 0 27 44"><defs><pattern id="hp1332" patternUnits="userSpaceOnUse" width="4" height="4"><path d="M-1 1L1 -1M0 4L4 0M3 5L5 3" stroke="#8c8c8c" stroke-width="1"/></pattern></defs><rect width="27" height="44.4" fill="url(#hp1332)"/></svg>
<div class="a" style="left:1418.5px;top:385.2px;width:27px;height:88.8px;background:#fff;box-shadow:0 0 3px rgba(40,60,30,.5);"></div>
<svg class="a" style="left:1418.5px;top:385.2px;overflow:hidden;" width="27" height="89" viewBox="0 0 27 89"><defs><pattern id="hp1432" patternUnits="userSpaceOnUse" width="4" height="4"><path d="M-1 1L1 -1M0 4L4 0M3 5L5 3" stroke="#8c8c8c" stroke-width="1"/></pattern></defs><rect width="27" height="88.8" fill="url(#hp1432)"/></svg>
<div class="a t" style="left:832.3299999999999px;width:600px;text-align:center;top:483.54px;font-size:10px;color:#e4f0dc;font-weight:bold;letter-spacing:0.66px;">ACCEPTED</div>
<div class="a t" style="left:932.54px;width:600px;text-align:center;top:483.54px;font-size:10px;color:#e4f0dc;font-weight:bold;letter-spacing:1.08px;">CLARIFICATION</div>
<div class="a t" style="left:1032.655px;width:600px;text-align:center;top:483.54px;font-size:10px;color:#e4f0dc;font-weight:bold;letter-spacing:1.31px;">PENDING</div>
<div class="a t" style="left:1132.26px;width:600px;text-align:center;top:483.54px;font-size:10px;color:#e4f0dc;font-weight:bold;letter-spacing:0.52px;">REJECTED</div>
<div class="a" style="left:1067px;top:504px;width:100px;height:17px;background:linear-gradient(#e6e6e6,#cfcfcf);border-radius:4px;border:1px solid #a9a9a9;"></div>
<div class="a t" style="left:1071px;top:506.69px;font-size:11px;color:#222;">Response Type</div>
<svg class="a" style="left:1154px;top:510px;" width="8" height="5" viewBox="0 0 8 5"><path d="M0 0H8L4 4.5Z" fill="#333"/></svg>
<div class="a" style="left:1064px;top:546px;width:416px;height:33px;background:#e8ecf2;"></div>
<div class="a" style="left:1064px;top:579px;width:416px;height:1px;background:#b8b8b8;"></div>
<div class="a t" style="left:1067px;top:556.80px;font-size:13px;color:#111;">Response Type</div>
<div class="a t" style="left:1170px;top:556.80px;font-size:13px;color:#111;">Description</div>
<div class="a" style="left:1064px;top:579px;width:104px;height:33px;background:#c4dfb3;"></div>
<div class="a" style="left:1064px;top:612px;width:416px;height:1px;background:#b8b8b8;"></div>
<div class="a t" style="left:1067px;top:589.80px;font-size:13px;color:#111;">Accepted</div>
<div class="a t" style="left:1170px;top:589.80px;font-size:13px;color:#111;">Comment accepted; requirements updated</div>
<div class="a" style="left:1064px;top:612px;width:104px;height:33px;background:#e8edf3;"></div>
<div class="a" style="left:1064px;top:645px;width:416px;height:1px;background:#b8b8b8;"></div>
<div class="a t" style="left:1067px;top:622.80px;font-size:13px;color:#111;">Clarification</div>
<div class="a t" style="left:1170px;top:622.80px;font-size:13px;color:#111;">Clarification provided. No updates to Requirements</div>
<div class="a" style="left:1064px;top:645px;width:104px;height:33px;background:#ffe699;"></div>
<div class="a" style="left:1064px;top:678px;width:416px;height:1px;background:#b8b8b8;"></div>
<div class="a t" style="left:1067px;top:655.80px;font-size:13px;color:#111;">Pending</div>
<div class="a t" style="left:1170px;top:655.80px;font-size:13px;color:#111;">Issue is not resolved yet.</div>
<div class="a" style="left:1064px;top:678px;width:104px;height:33px;background:#ffccff;"></div>
<div class="a" style="left:1064px;top:711px;width:416px;height:1px;background:#b8b8b8;"></div>
<div class="a t" style="left:1067px;top:688.80px;font-size:13px;color:#111;">Rejected</div>
<div class="a t" style="left:1170px;top:688.80px;font-size:13px;color:#111;">Comment rejected</div>
<div class="a" style="left:1598px;top:162px;width:22px;height:667px;background:#fff;"></div>
<div class="a" style="left:1601px;top:164px;width:15px;height:15px;background:#fff;border:1px solid #ababab;"></div>
<svg class="a" style="left:1604px;top:169px;" width="9" height="5" viewBox="0 0 9 5"><path d="M0 4.5H9L4.5 0Z" fill="#666"/></svg>
<div class="a" style="left:1601px;top:179px;width:15px;height:102px;background:#fff;border:1px solid #ababab;"></div>
<div class="a" style="left:1601px;top:281px;width:15px;height:534px;background:#e9edf3;"></div>
<div class="a" style="left:1601px;top:815px;width:15px;height:15px;background:#fff;border:1px solid #ababab;"></div>
<svg class="a" style="left:1604px;top:820px;" width="9" height="5" viewBox="0 0 9 5"><path d="M0 0H9L4.5 4.5Z" fill="#666"/></svg>
<div class="a" style="left:18px;top:829px;width:1602px;height:28px;background:#f3f3f3;"></div>
<div class="a" style="left:18px;top:829px;width:1580px;height:1px;background:#c6c6c6;"></div>
<svg class="a" style="left:44px;top:838px;" width="6" height="9" viewBox="0 0 6 9"><path d="M5 0V9L0 4.5Z" fill="#bbb"/></svg>
<svg class="a" style="left:74px;top:838px;" width="6" height="9" viewBox="0 0 6 9"><path d="M0 0V9L5 4.5Z" fill="#999"/></svg>
<div class="a" style="left:119px;top:829px;width:86px;height:27px;background:#fff;border-left:1px solid #c6c6c6;border-right:1px solid #c6c6c6;"></div>
<div class="a" style="left:119px;top:852px;width:86px;height:2px;background:#217346;"></div>
<div class="a t" style="left:131px;top:835.92px;font-size:12.5px;color:#217346;font-weight:bold;">SLA Items</div>
<div class="a t" style="left:217px;top:835.92px;font-size:12.5px;color:#444;">Sheet1</div>
<div class="a" style="left:268px;top:833px;width:1px;height:20px;background:#c6c6c6;"></div>
<svg class="a" style="left:301px;top:834px;" width="18" height="18" viewBox="0 0 18 18"><circle cx="9" cy="9" r="7.5" fill="none" stroke="#666" stroke-width="1.3"/><path d="M9 4.5V13.5M4.5 9H13.5" stroke="#555" stroke-width="1.8"/></svg>
<svg class="a" style="left:1308px;top:837px;" width="3" height="12" viewBox="0 0 3 12"><circle cx="1.5" cy="1.5" r="1" fill="#999"/><circle cx="1.5" cy="6" r="1" fill="#999"/><circle cx="1.5" cy="10.5" r="1" fill="#999"/></svg>
<div class="a" style="left:1326px;top:836px;width:15px;height:15px;background:#fff;border:1px solid #ababab;"></div>
<svg class="a" style="left:1331px;top:840px;" width="5" height="7" viewBox="0 0 5 7"><path d="M4.5 0V7L0 3.5Z" fill="#666"/></svg>
<div class="a" style="left:1341px;top:836px;width:204px;height:15px;background:#fff;border:1px solid #ababab;"></div>
<div class="a" style="left:1545px;top:837px;width:38px;height:13px;background:#e9edf3;"></div>
<div class="a" style="left:1583px;top:836px;width:15px;height:15px;background:#fff;border:1px solid #ababab;"></div>
<svg class="a" style="left:1588px;top:840px;" width="5" height="7" viewBox="0 0 5 7"><path d="M0 0V7L4.5 3.5Z" fill="#666"/></svg>
<div class="a" style="left:18px;top:857px;width:1602px;height:22px;background:#217346;"></div>
<div class="a" style="left:18px;top:878px;width:1602px;height:1px;background:#d8eadc;"></div>
<div class="a t" style="left:26px;top:863.11px;font-size:10.5px;color:#e6f5e9;letter-spacing:-0.2px;">READY</div>
<svg class="a" style="left:79px;top:860px;" width="14" height="15" viewBox="0 0 14 15"><circle cx="3.5" cy="3.5" r="3" fill="#e6f5e9"/><rect x="2.5" y="5.5" width="11" height="9" fill="none" stroke="#e6f5e9"/><path d="M2.5 8H13.5M2.5 10.5H13.5M2.5 13H13.5M5.5 8V14.5M8 8V14.5M10.5 8V14.5" stroke="#e6f5e9" stroke-width=".8"/></svg>
<div class="a" style="left:1339px;top:861px;width:1px;height:13px;background:#e6f5e9;"></div>
<div class="a" style="left:1339px;top:861px;width:13px;height:1px;background:#e6f5e9;"></div>
<div class="a" style="left:1343px;top:861px;width:1px;height:13px;background:#e6f5e9;"></div>
<div class="a" style="left:1339px;top:865px;width:13px;height:1px;background:#e6f5e9;"></div>
<div class="a" style="left:1347px;top:861px;width:1px;height:13px;background:#e6f5e9;"></div>
<div class="a" style="left:1339px;top:869px;width:13px;height:1px;background:#e6f5e9;"></div>
<div class="a" style="left:1351px;top:861px;width:1px;height:13px;background:#e6f5e9;"></div>
<div class="a" style="left:1339px;top:873px;width:13px;height:1px;background:#e6f5e9;"></div>
<div class="a" style="left:1377px;top:861px;width:14px;height:13px;border:1px solid #e6f5e9;"></div>
<div class="a" style="left:1380px;top:864px;width:8px;height:8px;border:1px solid #e6f5e9;"></div>
<div class="a" style="left:1382px;top:866px;width:4px;height:1px;background:#e6f5e9;"></div>
<div class="a" style="left:1382px;top:868px;width:4px;height:1px;background:#e6f5e9;"></div>
<div class="a" style="left:1382px;top:870px;width:4px;height:1px;background:#e6f5e9;"></div>
<div class="a" style="left:1415px;top:861px;width:14px;height:13px;border:1px solid #e6f5e9;"></div>
<div class="a" style="left:1417px;top:861px;width:4px;height:6px;background:#e6f5e9;"></div>
<div class="a" style="left:1423px;top:861px;width:4px;height:4px;background:#e6f5e9;"></div>
<div class="a" style="left:1446px;top:867px;width:6px;height:2px;background:#e6f5e9;"></div>
<div class="a" style="left:1456px;top:867px;width:100px;height:1px;background:#cfe5d4;"></div>
<div class="a" style="left:1504px;top:863px;width:4px;height:10px;background:#e6f5e9;"></div>
<svg class="a" style="left:1560px;top:863px;" width="9" height="9" viewBox="0 0 9 9"><path d="M4.5 0V9M0 4.5H9" stroke="#e6f5e9" stroke-width="2"/></svg>
<div class="a t" style="left:1583px;top:862.69px;font-size:11px;color:#e6f5e9;">100%</div>
</body></html>
